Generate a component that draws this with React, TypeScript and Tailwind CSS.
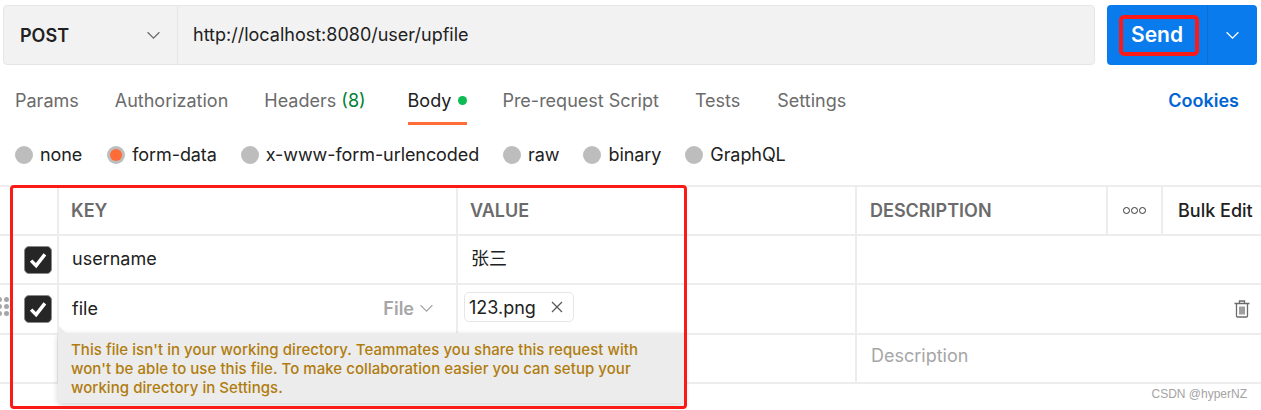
import React from "react";

const font = { fontFamily: '"Inter", "Noto Sans CJK SC", sans-serif' };

function Chevron({ className }: { className: string }) {
  return (
    <svg viewBox="0 0 14 14" className={className} fill="none" stroke="currentColor" strokeWidth="1.2">
      <path d="M1.5 4 L7 9.5 L12.5 4" />
    </svg>
  );
}

function Check() {
  return (
    <div className="w-[28px] h-[28px] rounded-[5px] bg-[#262626] border border-[#8a8a8a] flex items-center justify-center">
      <svg viewBox="0 0 16 16" className="w-[20px] h-[20px]" fill="none" stroke="#fff" strokeWidth="2.8">
        <path d="M2.5 8.5 L6.5 12.5 L13.5 3.5" />
      </svg>
    </div>
  );
}

function Radio({ label, on }: { label: string; on?: boolean }) {
  return (
    <div className="flex items-center gap-[7px]">
      <span className="w-[18px] h-[18px] rounded-full bg-[#bdbdbd] flex items-center justify-center">
        {on && <span className="w-[12px] h-[12px] rounded-full bg-[#ff6c37]" />}
      </span>
      <span className="text-[18px] text-[#212121] tracking-[-0.08px]">{label}</span>
    </div>
  );
}

const rowLine = "border-b-2 border-[#ededed]";
const col = "border-r-2 border-[#ededed]";

export default function App() {
  return (
    <div style={font} className="relative w-[1261px] h-[410px] overflow-hidden bg-white">
      <div className="flex pt-[5px] pl-[3px] pr-[4px] gap-[12px] h-[65px]">
        <div className="flex flex-1 rounded-[4px] bg-[#f2f2f2] border border-[#e6e6e6]">
          <div className="w-[174px] flex items-center justify-between pl-[16px] pr-[16px] border-r border-[#e6e6e6]">
            <span className="text-[18px] font-semibold text-[#212121]">POST</span>
            <Chevron className="w-[15px] h-[15px] text-[#6b6b6b]" />
          </div>
          <div className="flex items-center pl-[15px] text-[18px] text-[#212121] pb-[1px]">http://localhost:8080/user/upfile</div>
        </div>
        <div className="w-[150px] flex rounded-[4px] bg-[#097bed] text-white">
          <div className="w-[101px] flex items-center justify-center text-[21px] font-semibold border-r border-[#0a6fd4]">Send</div>
          <div className="flex-1 flex items-center justify-center">
            <Chevron className="w-[15px] h-[15px]" />
          </div>
        </div>
      </div>

      <div className="flex items-start h-[60px] pl-[15px] pr-[22px] pt-[22px] text-[18px] text-[#6b6b6b]">
        <span className="mr-[36px]">Params</span>
        <span className="mr-[36px]">Authorization</span>
        <span className="mr-[42px]">Headers <span className="text-[#007f31]">(8)</span></span>
        <div className="flex flex-col mr-[35px] h-[38px] border-b-[3px] border-[#ff6c37]">
          <div className="flex items-center gap-[7px] text-[#212121]">
            Body <span className="w-[9px] h-[9px] rounded-full bg-[#0cbb52]" />
          </div>
        </div>
        <span className="mr-[36px]">Pre-request Script</span>
        <span className="mr-[37px]">Tests</span>
        <span>Settings</span>
        <span className="ml-auto font-semibold text-[#0265d2]">Cookies</span>
      </div>

      <div className="flex items-center gap-[24px] h-[60px] pl-[15px] pb-[1px]">
        <Radio label="none" />
        <div className="ml-[1px]">
          <Radio label="form-data" on />
        </div>
        <Radio label="x-www-form-urlencoded" />
        <Radio label="raw" />
        <Radio label="binary" />
        <Radio label="GraphQL" />
      </div>

      <div className="border-t-2 border-[#ededed]">
        <div className={`flex h-[49px] ${rowLine} text-[18px] font-semibold text-[#6b6b6b]`}>
          <div className={`w-[59px] ${col}`} />
          <div className={`w-[399px] ${col} flex items-center pl-[12px] pb-[1px]`}>KEY</div>
          <div className={`w-[399px] ${col} flex items-center pl-[12px] pb-[1px]`}>VALUE</div>
          <div className={`w-[251px] ${col} flex items-center pl-[13px] pb-[1px]`}>DESCRIPTION</div>
          <div className={`w-[55px] ${col} flex items-center justify-center gap-[1px]`}>
            <span className="w-[7px] h-[7px] rounded-full border-[1.5px] border-[#333]" />
            <span className="w-[7px] h-[7px] rounded-full border-[1.5px] border-[#333]" />
            <span className="w-[7px] h-[7px] rounded-full border-[1.5px] border-[#333]" />
          </div>
          <div className="flex-1 flex items-center pl-[15px] pb-[1px] text-[#212121] font-medium whitespace-nowrap">Bulk Edit</div>
        </div>

        <div className={`flex h-[49px] ${rowLine} text-[18px] text-[#212121]`}>
          <div className={`w-[59px] ${col} flex items-center pl-[24px]`}><Check /></div>
          <div className={`w-[399px] ${col} flex items-center pl-[13px] pb-[2px]`}>username</div>
          <div className={`w-[399px] ${col} flex items-center pl-[13px] pb-[2px]`}>张三</div>
          <div className="flex-1" />
        </div>

        <div className={`relative flex h-[50px] ${rowLine} text-[18px] text-[#212121]`}>
          <div className="absolute left-0 top-[12px] grid grid-cols-2 gap-[2px] w-[12px] -ml-[3px]">
            {[0, 1, 2, 3, 4, 5].map((i) => (
              <span key={i} className="w-[5px] h-[5px] rounded-full bg-[#a6a6a6]" />
            ))}
          </div>
          <div className={`w-[59px] ${col} flex items-center pl-[24px]`}><Check /></div>
          <div className={`w-[399px] ${col} flex items-center justify-between pl-[13px] pr-[22px] pb-[2px]`}>
            <span>file</span>
            <span className="flex items-center gap-[5px] font-semibold text-[#a6a6a6]">
              File <Chevron className="w-[15px] h-[15px]" />
            </span>
          </div>
          <div className={`w-[399px] ${col} pl-[6px] pt-[7px]`}>
            <div className="inline-flex items-center gap-[15px] h-[30px] pl-[4px] pr-[10px] rounded-[5px] border border-[#e6e6e6]">
              123.png
              <svg viewBox="0 0 12 12" className="w-[12px] h-[12px]" fill="none" stroke="#555" strokeWidth="1.2">
                <path d="M1 1 L11 11 M11 1 L1 11" />
              </svg>
            </div>
          </div>
          <div className="flex-1 flex items-center justify-end pr-[11px]">
            <svg viewBox="0 0 16 18" className="w-[16px] h-[18px]" fill="none" stroke="#6b6b6b" strokeWidth="1.3">
              <path d="M0.5 3.5 H15.5 M5.5 3 V1 H10.5 V3 M2.5 4 V16 Q2.5 17 3.5 17 H12.5 Q13.5 17 13.5 16 V4 M6 6.5 V14.5 M8 6.5 V14.5 M10 6.5 V14.5" />
            </svg>
          </div>
        </div>

        <div className={`flex h-[49px] ${rowLine}`}>
          <div className={`w-[59px] ${col}`} />
          <div className={`w-[399px] ${col}`} />
          <div className={`w-[399px] ${col}`} />
          <div className="flex-1 flex items-center pl-[14px] pb-[6px] text-[18px] text-[#a6a6a6]">Description</div>
        </div>
      </div>

      {/* tooltip */}
      <div className="absolute left-[58px] top-[333px] w-[626px] h-[70px] pt-[7px] pl-[13px] rounded-[3px] bg-[#ececec] shadow-[0_2px_6px_rgba(0,0,0,0.18)] text-[15px] leading-[19px] font-medium tracking-[0.05px] text-[#b07c0e]">
        <div className="absolute -top-[8px] left-0 w-0 h-0 border-l-[8px] border-l-[#ececec] border-t-[8px] border-t-transparent" />
        <p>This file isn't in your working directory. Teammates you share this request with</p>
        <p>won't be able to use this file. To make collaboration easier you can setup your</p>
        <p>working directory in Settings.</p>
      </div>

      {/* red annotation boxes */}
      <div className="absolute left-[1119px] top-[15px] w-[80px] h-[41px] rounded-[5px] border-[4px] border-[#fb1a17]" />
      <div className="absolute left-[10px] top-[185px] w-[677px] h-[224px] rounded-[4px] border-[3px] border-[#fb1a17]" />

      <div className="absolute right-[14px] top-[386px] text-[12px] leading-[16px] text-[#a3a3a3]" style={{ fontFamily: '"Liberation Sans", sans-serif' }}>CSDN @hyperNZ</div>
    </div>
  );
}
